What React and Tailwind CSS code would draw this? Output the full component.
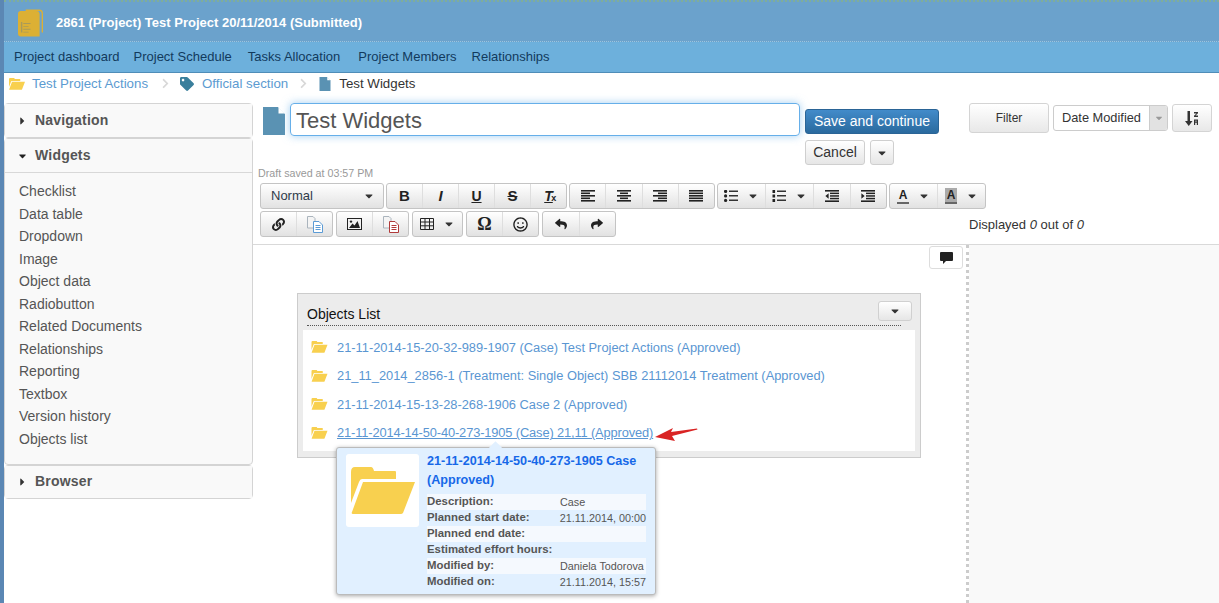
import {
  FaCaretDown, FaCaretRight, FaChevronRight, FaLink, FaRegSmile, FaReply, FaShare, FaTag,
} from "react-icons/fa";

const navItems = ["Project dashboard", "Project Schedule", "Tasks Allocation", "Project Members", "Relationships"];

const widgets = [
  "Checklist", "Data table", "Dropdown", "Image", "Object data", "Radiobutton",
  "Related Documents", "Relationships", "Reporting", "Textbox", "Version history", "Objects list",
];

const objects = [
  "21-11-2014-15-20-32-989-1907 (Case) Test Project Actions (Approved)",
  "21_11_2014_2856-1 (Treatment: Single Object) SBB 21112014 Treatment (Approved)",
  "21-11-2014-15-13-28-268-1906 Case 2 (Approved)",
  "21-11-2014-14-50-40-273-1905 (Case) 21,11 (Approved)",
];

const details = [
  ["Description:", "Case"],
  ["Planned start date:", "21.11.2014, 00:00"],
  ["Planned end date:", ""],
  ["Estimated effort hours:", ""],
  ["Modified by:", "Daniela Todorova"],
  ["Modified on:", "21.11.2014, 15:57"],
];

const DocIcon = ({ className }) => (
  <svg viewBox="0 0 22 28" className={className}>
    <path d="M0 0H15L22 7V28H0Z" fill="#5a92b3" />
    <path d="M15.5 0L22 6.5H15.5Z" fill="#ffffff" />
  </svg>
);

const Folder = ({ className }) => (
  <svg viewBox="0 0 64 48" className={className}>
    <path d="M0 5Q0 0 4 0H20Q22 0 23 4H44Q45 4 45 5V12H11Q9 12 8 15L0 36Z" fill="#f8d04f" />
    <path d="M12 15H64L52 46Q51 47 50 47H2Q0 47 1 45Z" fill="#f8d04f" />
  </svg>
);

const Logo = () => (
  <svg viewBox="0 0 26 28" className="h-[28px] w-[25px]">
    <path d="M8 0.7H22Q25.3 0.7 25.3 4V24" fill="none" stroke="#dcb034" strokeWidth="1.4" />
    <path d="M3 1.5H19Q22.5 1.5 22.5 5V28H3Q0 28 0 25V4.5Q0 1.5 3 1.5Z" fill="#dcb034" />
    <path d="M3 13H4.5V24H3ZM5.5 14H13V15H5.5ZM5.5 17H11V18H5.5ZM5.5 20H13V21H5.5ZM5.5 23H11V24H5.5Z" fill="#a89a5a" />
  </svg>
);

// toolbar drawings: rows of bars, optionally shifted
const Bars = ({ rows }) => (
  <svg viewBox="0 0 14 12" className="h-[12px] w-[14px]">
    {rows.map(([x, w], i) => (
      <rect key={i} x={x} y={i * 2.5} width={w} height="1.6" fill="#222222" />
    ))}
  </svg>
);

const ListIcon = ({ numbered }) => (
  <svg viewBox="0 0 14 12" className="h-[12px] w-[14px]">
    {[0, 4.5, 9].map((y) =>
      numbered ? (
        <rect key={y} x="0.5" y={y} width="2.6" height="3" fill="#222222" />
      ) : (
        <circle key={y} cx="1.6" cy={y + 1.4} r="1.6" fill="#222222" />
      )
    )}
    <rect x="5" y="0.5" width="9" height="1.5" fill="#333333" />
    <rect x="5" y="5" width="9" height="1.5" fill="#333333" />
    <rect x="5" y="9.5" width="9" height="1.5" fill="#333333" />
  </svg>
);

const IndentIcon = ({ out }) => (
  <svg viewBox="0 0 14 12" className="h-[12px] w-[14px]">
    <rect x="0" y="0" width="14" height="1.6" fill="#222222" />
    <rect x="5" y="2.6" width="9" height="1.5" fill="#222222" />
    <rect x="5" y="5.2" width="9" height="1.5" fill="#222222" />
    <rect x="5" y="7.8" width="9" height="1.5" fill="#222222" />
    <rect x="0" y="10.4" width="14" height="1.6" fill="#222222" />
    <path d={out ? "M3.6 3.2V8.8L0.4 6Z" : "M0.4 3.2V8.8L3.6 6Z"} fill="#222222" />
  </svg>
);

const PasteIcon = ({ color }) => (
  <svg viewBox="0 0 16 17" className="h-[17px] w-[16px]">
    <path d="M0.5 0.5H6L8 2.5V12H0.5Z" fill="#f4f4f4" stroke="#aab4bd" />
    <path d="M6.5 5.5H12L15.5 9V16.5H6.5Z" fill="#ffffff" stroke={color} />
    <path d="M8.5 9.5H13.5M8.5 11.5H13.5M8.5 13.5H13.5" stroke={color} />
  </svg>
);

const ImageIcon = () => (
  <svg viewBox="0 0 15 12" className="h-[12px] w-[15px]">
    <rect x="0.5" y="0.5" width="14" height="11" fill="#f2f2f2" stroke="#222222" />
    <path d="M2 10L5.5 5.5L7.5 7.5L10.5 3L13 10Z" fill="#222222" />
    <circle cx="4" cy="3.6" r="1.2" fill="#222222" />
  </svg>
);

const TableIcon = () => (
  <svg viewBox="0 0 14 12" className="h-[12px] w-[14px]" fill="none" stroke="#222222">
    <path d="M0.5 0.5H13.5V11.5H0.5ZM0.5 4H13.5M0.5 7.8H13.5M5 0.5V11.5M9.5 0.5V11.5" />
  </svg>
);

const SortIcon = () => (
  <svg viewBox="0 0 14 15" className="h-[15px] w-[14px]">
    <path d="M2.5 0H5V10H7.5L3.75 15L0 10H2.5Z" fill="#333333" />
    <path d="M9 1H13V2.2L10.5 4.6H13V6H9V4.8L11.5 2.4H9ZM9 8.5H13V14H9ZM10.2 9.7V10.6H11.8V9.7ZM10.2 11.8V14H11.8V11.8Z" fill="#333333" />
  </svg>
);

const CommentIcon = () => (
  <svg viewBox="0 0 13 12" className="h-[12px] w-[13px]">
    <path d="M1 0H12Q13 0 13 1V8Q13 9 12 9H6L3 12V9H1Q0 9 0 8V1Q0 0 1 0Z" fill="#222222" />
  </svg>
);

const ToolGroup = ({ children, width }) => (
  <div className={`flex h-[26px] shrink-0 items-center overflow-hidden rounded-[3px] border border-[#c4c4c4] bg-gradient-to-b from-[#ffffff] to-[#e2e2e2] ${width}`}>
    {children}
  </div>
);

const Tool = ({ children, last }) => (
  <div className={`flex h-full flex-1 items-center justify-center gap-[9px] text-[#222222] ${last ? "" : "border-r border-[#dedede]"}`}>
    {children}
  </div>
);

const Caret = () => <FaCaretDown className="shrink-0 text-[12px] text-[#333333]" />;

const PanelHead = ({ title, open, height = "h-[33px]" }) => (
  <div className={`flex items-center bg-[#f9f9f9] pl-[14px] text-[14px] font-bold text-[#555555] ${height} ${open ? "box-content border-b border-[#d8d8d8]" : ""}`}>
    {open ? <FaCaretDown className="w-[7px] text-[12px] text-[#222222]" /> : <FaCaretRight className="w-[7px] text-[12px] text-[#333333]" />}
    <span className="pl-[9px] tracking-[0.2px]">{title}</span>
  </div>
);

export default function App() {
  return (
    <div className="relative h-[603px] w-[1219px] overflow-hidden border-l-4 border-[#5b87b4] bg-white font-['Liberation_Sans',Arial,sans-serif] text-[14px] text-[#333333]">
      {/* title bar */}
      <div className="flex h-[42px] items-center gap-[13px] border-t-2 border-b border-t-[#7fae9a] border-b-[#9cc4de] bg-[#6ba2cc] pl-[14px] [border-bottom-style:dotted] [border-top-style:dotted]">
        <div className="mt-[2px] flex"><Logo /></div>
        <span className="mt-[2px] text-[13px] font-bold text-white">2861 (Project) Test Project 20/11/2014 (Submitted)</span>
      </div>
      {/* project menu */}
      <div className="flex h-[31px] items-center gap-[15px] border-b border-[#4f8db8] bg-[#6db0dc] pl-[10px] text-[13px] text-[#123a5c]">
        {navItems.map((item) => (
          <span key={item} className="first:mr-[-1px] [&:nth-child(2)]:mr-[1px] [&:nth-child(3)]:mr-[3px]">{item}</span>
        ))}
      </div>
      {/* breadcrumb */}
      <div className="flex h-[23px] items-center pb-[2px] pl-[5px] text-[13.3px]">
        <Folder className="h-[12px] w-[16px]" />
        <span className="ml-[7px] text-[#5c9bd1]">Test Project Actions</span>
        <FaChevronRight className="ml-[12px] text-[11px] text-[#d8d8d8]" />
        <FaTag className="ml-[9px] text-[14px] text-[#3a7f9c]" />
        <span className="ml-[8px] text-[#5c9bd1]">Official section</span>
        <FaChevronRight className="ml-[10px] text-[11px] text-[#d8d8d8]" />
        <DocIcon className="ml-[10px] h-[14px] w-[12px]" />
        <span className="ml-[8px] text-[#333333]">Test Widgets</span>
      </div>

      <div className="flex h-[507px]">
        {/* left panels */}
        <div className="w-[249px] shrink-0 pt-[7px]">
          <div className="rounded-[4px] border border-[#d4d4d4] bg-[#f9f9f9]">
            <PanelHead title="Navigation" />
          </div>
          <div className="rounded-[4px] border border-[#d4d4d4] bg-[#f9f9f9]">
            <PanelHead title="Widgets" open />
            <div className="pb-[13px] pl-[14px] pt-[7px] text-[#555555]">
              {widgets.map((widget) => (
                <div key={widget} className="h-[22.55px] leading-[22.55px]">{widget}</div>
              ))}
            </div>
          </div>
          <div className="rounded-[4px] border border-[#d4d4d4] bg-[#f9f9f9]">
            <PanelHead title="Browser" height="h-[32px]" />
          </div>
        </div>

        <div className="flex min-w-0 flex-1 flex-col">
          {/* editor head */}
          <div className="flex h-[149px] border-b border-[#d9d9d9]">
            <div className="w-[716px] shrink-0 pl-[5px] pt-[7px]">
              <div className="flex">
                <DocIcon className="ml-[5px] mt-[4px] h-[28px] w-[22px]" />
                <div className="ml-[5px] flex h-[33px] w-[510px] items-center rounded-[4px] border border-[#66afe9] pl-[5px] pt-[2px] text-[22px] text-[#555555] shadow-[0_0_8px_rgba(102,175,233,0.6)]">
                  Test Widgets
                </div>
                <div className="ml-[5px] mt-[6px]">
                  <div className="flex h-[25px] w-[134px] items-center justify-center rounded-[3px] border border-[#2a6496] bg-gradient-to-b from-[#428bca] to-[#2a6a9e] text-white">
                    Save and continue
                  </div>
                  <div className="mt-[6px] flex gap-[5px]">
                    <div className="flex h-[25px] w-[60px] items-center justify-center rounded-[3px] border border-[#cfcfcf] bg-gradient-to-b from-[#ffffff] to-[#e6e6e6]">Cancel</div>
                    <div className="flex h-[25px] w-[24px] items-center justify-center rounded-[3px] border border-[#cfcfcf] bg-gradient-to-b from-[#ffffff] to-[#e6e6e6]"><Caret /></div>
                  </div>
                </div>
              </div>
              <div className="mt-[2px] text-[10.7px] leading-[12px] text-[#999999]">Draft saved at 03:57 PM</div>
              <div className="ml-[2px] mt-[4px] flex gap-[2px]">
                <ToolGroup width="w-[124px]">
                  <div className="flex h-full w-full items-center justify-between pl-[10px] pr-[8px] text-[13px] text-[#2f3b4a]">Normal<Caret /></div>
                </ToolGroup>
                <ToolGroup width="w-[181px]">
                  <Tool><span className="text-[15px] font-bold">B</span></Tool>
                  <Tool><span className="text-[15px] font-bold italic">I</span></Tool>
                  <Tool><span className="text-[14px] font-bold underline">U</span></Tool>
                  <Tool><span className="text-[15px] font-bold line-through">S</span></Tool>
                  <Tool last><span className="relative text-[14px] font-bold italic underline">T<span className="absolute left-[7px] top-[6px] text-[9px] not-italic">x</span></span></Tool>
                </ToolGroup>
                <ToolGroup width="w-[146px]">
                  <Tool><Bars rows={[[0, 14], [0, 9], [0, 14], [0, 9], [0, 14]]} /></Tool>
                  <Tool><Bars rows={[[0, 14], [3, 8], [0, 14], [3, 8], [0, 14]]} /></Tool>
                  <Tool><Bars rows={[[0, 14], [5, 9], [0, 14], [5, 9], [0, 14]]} /></Tool>
                  <Tool last><Bars rows={[[0, 14], [0, 14], [0, 14], [0, 14], [0, 14]]} /></Tool>
                </ToolGroup>
                <ToolGroup width="w-[170px]">
                  <div className="flex h-full w-[48px] items-center justify-center gap-[9px] border-r border-[#dedede]"><ListIcon /><Caret /></div>
                  <div className="flex h-full w-[48px] items-center justify-center gap-[9px] border-r border-[#dedede]"><ListIcon numbered /><Caret /></div>
                  <Tool><IndentIcon out /></Tool>
                  <Tool last><IndentIcon /></Tool>
                </ToolGroup>
                <ToolGroup width="w-[97px]">
                  <Tool><span className="border-b-2 border-[#666666] px-[2px] text-[12px] font-bold leading-[14px]">A</span><Caret /></Tool>
                  <Tool last><span className="border-b-2 border-[#666666] bg-[#aaaaaa] px-[2px] text-[12px] font-bold leading-[14px]">A</span><Caret /></Tool>
                </ToolGroup>
              </div>
              <div className="ml-[2px] mt-[2px] flex gap-[3px]">
                <ToolGroup width="w-[73px]">
                  <Tool><FaLink className="text-[13px]" /></Tool>
                  <Tool last><PasteIcon color="#5b9bd5" /></Tool>
                </ToolGroup>
                <ToolGroup width="w-[73px]">
                  <Tool><ImageIcon /></Tool>
                  <Tool last><PasteIcon color="#b03a3a" /></Tool>
                </ToolGroup>
                <ToolGroup width="w-[51px]">
                  <Tool last><TableIcon /><Caret /></Tool>
                </ToolGroup>
                <ToolGroup width="w-[73px]">
                  <Tool><span className="font-['Liberation_Serif',serif] text-[18px] font-bold">Ω</span></Tool>
                  <Tool last><FaRegSmile className="text-[15px]" /></Tool>
                </ToolGroup>
                <ToolGroup width="w-[74px]">
                  <Tool><FaReply className="text-[12px]" /></Tool>
                  <Tool last><FaShare className="text-[12px]" /></Tool>
                </ToolGroup>
              </div>
            </div>
            <div className="flex-1 pt-[7px]">
              <div className="flex items-start gap-[4px]">
                <div className="flex h-[30px] w-[80px] items-center justify-center rounded-[3px] border border-[#d4d4d4] bg-gradient-to-b from-[#ffffff] to-[#e8e8e8] text-[12px]">Filter</div>
                <div className="mt-[2px] flex h-[26px] w-[115px] items-center overflow-hidden rounded-[3px] border border-[#cccccc] bg-white pl-[8px] text-[12.8px]">
                  Date Modified
                  <div className="ml-auto flex h-full w-[18px] items-center justify-center border-l border-[#cccccc] bg-[#e2e2e2]"><FaCaretDown className="text-[10px] text-[#999999]" /></div>
                </div>
                <div className="mt-[1px] flex h-[28px] w-[40px] items-center justify-center rounded-[3px] border border-[#d4d4d4] bg-gradient-to-b from-[#ffffff] to-[#e8e8e8]"><SortIcon /></div>
              </div>
              <div className="mt-[84px] text-[13px] leading-[16px]">Displayed <em>0</em> out of <em>0</em></div>
            </div>
          </div>

          {/* canvas */}
          <div className="flex flex-1">
            <div className="relative w-[716px] shrink-0 border-r-[3px] border-dotted border-[#cccccc] pl-[44px] pt-[48px]">
              <div className="absolute right-[3px] top-[1px] flex h-[23px] w-[34px] items-center justify-center rounded-[3px] border border-[#dddddd] bg-white">
                <CommentIcon />
              </div>
              <div className="w-[624px] border border-[#cccccc] bg-[#ececec] px-[5px] pb-[6px] pt-[7px]">
                <div className="flex items-start">
                  <div className="ml-[4px] w-[594px] border-b border-dotted border-[#555555] pb-[1px] pt-[3px] text-[14px] leading-[20px] text-[#111111]">Objects List</div>
                  <div className="ml-[-23px] flex h-[20px] w-[34px] shrink-0 items-center justify-center rounded-[3px] border border-[#d0d0d0] bg-gradient-to-b from-[#ffffff] to-[#e6e6e6]"><Caret /></div>
                </div>
                <div className="mt-[4px] bg-white px-[8px] pb-[4px] pt-[3px]">
                  {objects.map((object, i) => (
                    <div key={object} className="flex h-[28.6px] items-center gap-[9px] text-[12.85px] text-[#5a96d2]">
                      <Folder className="h-[12px] w-[17px]" />
                      <span className={i === 3 ? "tracking-[-0.13px] underline" : ""}>{object}</span>
                    </div>
                  ))}
                </div>
              </div>
              {/* annotation arrow */}
              <svg viewBox="0 0 43 15" className="absolute left-[402px] top-[182px] h-[15px] w-[43px]">
                <path d="M0 10L18 1L16 5L42 1.5L42.5 2.6L17 9L20 14Z" fill="#d92323" />
              </svg>
              {/* hover card */}
              <div className="absolute left-[83px] top-[202px] h-[148px] w-[320px] rounded-[3px] border border-[#bbbbbb] bg-[#e1f0ff] pl-[9px] pt-[6px] shadow-[0_1px_4px_rgba(0,0,0,0.35)]">
                <div className="absolute left-[154px] top-[-5px] h-[9px] w-[9px] rotate-45 bg-[#e1f0ff]" />
                <div className="relative flex gap-[8px]">
                  <div className="flex h-[73px] w-[73px] shrink-0 items-center justify-center rounded-[3px] bg-white">
                    <Folder className="h-[48px] w-[64px]" />
                  </div>
                  <div className="w-[219px]">
                    <div className="mt-[-2px] text-[12.6px] font-bold leading-[19px] text-[#1668e8]">21-11-2014-14-50-40-273-1905 Case (Approved)</div>
                    <div className="mt-[4px] text-[11.4px] text-[#555555]">
                      {details.map(([label, value], i) => (
                        <div key={label} className={`flex h-[16px] items-center whitespace-nowrap ${i % 2 === 0 ? "bg-[#f5f9fe]" : ""}`}>
                          <span className="w-[133px] font-bold">{label}</span>
                          <span className="text-[10.8px]">{value}</span>
                        </div>
                      ))}
                    </div>
                  </div>
                </div>
              </div>
            </div>
            <div className="flex-1 bg-[#f9f9f9]" />
          </div>
        </div>
      </div>
    </div>
  );
}
